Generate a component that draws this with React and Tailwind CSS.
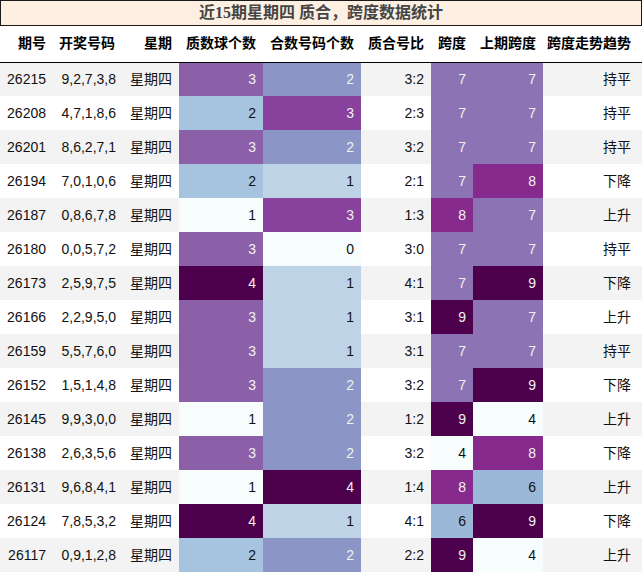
import React from "react";

const rows = [
  ["26215", "9,2,7,3,8", 3, 2, "3:2", 7, 7, "持平"],
  ["26208", "4,7,1,8,6", 2, 3, "2:3", 7, 7, "持平"],
  ["26201", "8,6,2,7,1", 3, 2, "3:2", 7, 7, "持平"],
  ["26194", "7,0,1,0,6", 2, 1, "2:1", 7, 8, "下降"],
  ["26187", "0,8,6,7,8", 1, 3, "1:3", 8, 7, "上升"],
  ["26180", "0,0,5,7,2", 3, 0, "3:0", 7, 7, "持平"],
  ["26173", "2,5,9,7,5", 4, 1, "4:1", 7, 9, "下降"],
  ["26166", "2,2,9,5,0", 3, 1, "3:1", 9, 7, "上升"],
  ["26159", "5,5,7,6,0", 3, 1, "3:1", 7, 7, "持平"],
  ["26152", "1,5,1,4,8", 3, 2, "3:2", 7, 9, "下降"],
  ["26145", "9,9,3,0,0", 1, 2, "1:2", 9, 4, "上升"],
  ["26138", "2,6,3,5,6", 3, 2, "3:2", 4, 8, "下降"],
  ["26131", "9,6,8,4,1", 1, 4, "1:4", 8, 6, "上升"],
  ["26124", "7,8,5,3,2", 4, 1, "4:1", 6, 9, "下降"],
  ["26117", "0,9,1,2,8", 2, 2, "2:2", 9, 4, "上升"],
];

const primeCls = {
  1: "bg-[#f7fcfd] text-[#111]",
  2: "bg-[#a6c4df] text-[#111]",
  3: "bg-[#8c5fa9] text-[#f1f1f1]",
  4: "bg-[#4d004b] text-[#f1f1f1]",
};
const compCls = {
  0: "bg-[#f7fcfd] text-[#111]",
  1: "bg-[#bfd3e6] text-[#111]",
  2: "bg-[#8c96c6] text-[#f1f1f1]",
  3: "bg-[#88419d] text-[#f1f1f1]",
  4: "bg-[#4d004b] text-[#f1f1f1]",
};
const spanCls = {
  4: "bg-[#f7fcfd] text-[#111]",
  6: "bg-[#9cb8d8] text-[#111]",
  7: "bg-[#8c73b4] text-[#f1f1f1]",
  8: "bg-[#872a8e] text-[#f1f1f1]",
  9: "bg-[#4d004b] text-[#f1f1f1]",
};

const headers = ["期号", "开奖号码", "星期", "质数球个数", "合数号码个数", "质合号比", "跨度", "上期跨度", "跨度走势趋势"];

export default function App() {
  return (
    <div className="w-[642px] bg-white font-['Liberation_Sans','Noto_Sans_CJK_SC',sans-serif] text-[14px] text-[#111]">
      <div className="h-[26px] border border-[#1a1a1a] bg-[#fdf0e2] text-center font-['Liberation_Serif','Noto_Sans_CJK_SC',serif] text-[16px] font-bold leading-[24px] text-[#454545]">
        近15期星期四 质合，跨度数据统计
      </div>
      <table className="w-[642px] table-fixed border-collapse">
        <colgroup>
          <col className="w-[53px]" />
          <col className="w-[69px]" />
          <col className="w-[57px]" />
          <col className="w-[84px]" />
          <col className="w-[98px]" />
          <col className="w-[70px]" />
          <col className="w-[42px]" />
          <col className="w-[70px]" />
          <col className="w-[99px]" />
        </colgroup>
        <thead>
          <tr className="h-[36px] border-b border-black">
            {headers.map((h, i) => (
              <th
                key={h}
                className={`p-0 text-right align-middle font-bold text-black whitespace-nowrap ${i === 8 ? "pr-[11px]" : "pr-[7px]"}`}
              >
                {h}
              </th>
            ))}
          </tr>
        </thead>
        <tbody>
          {rows.map((r, idx) => (
            <tr key={r[0]} className={`h-[34px] ${idx % 2 === 0 ? "bg-[#f3f3f3]" : "bg-white"}`}>
              <td className="p-0 pr-[7px] text-right">{r[0]}</td>
              <td className="p-0 pr-[6px] text-right">{r[1]}</td>
              <td className="p-0 pr-[7px] text-right">星期四</td>
              <td className={`p-0 pr-[7px] text-right ${primeCls[r[2]]}`}>{r[2]}</td>
              <td className={`p-0 pr-[7px] text-right ${compCls[r[3]]}`}>{r[3]}</td>
              <td className="p-0 pr-[7px] text-right">{r[4]}</td>
              <td className={`p-0 pr-[7px] text-right ${spanCls[r[5]]}`}>{r[5]}</td>
              <td className={`p-0 pr-[7px] text-right ${spanCls[r[6]]}`}>{r[6]}</td>
              <td className="p-0 pr-[11px] text-right">{r[7]}</td>
            </tr>
          ))}
        </tbody>
      </table>
    </div>
  );
}
